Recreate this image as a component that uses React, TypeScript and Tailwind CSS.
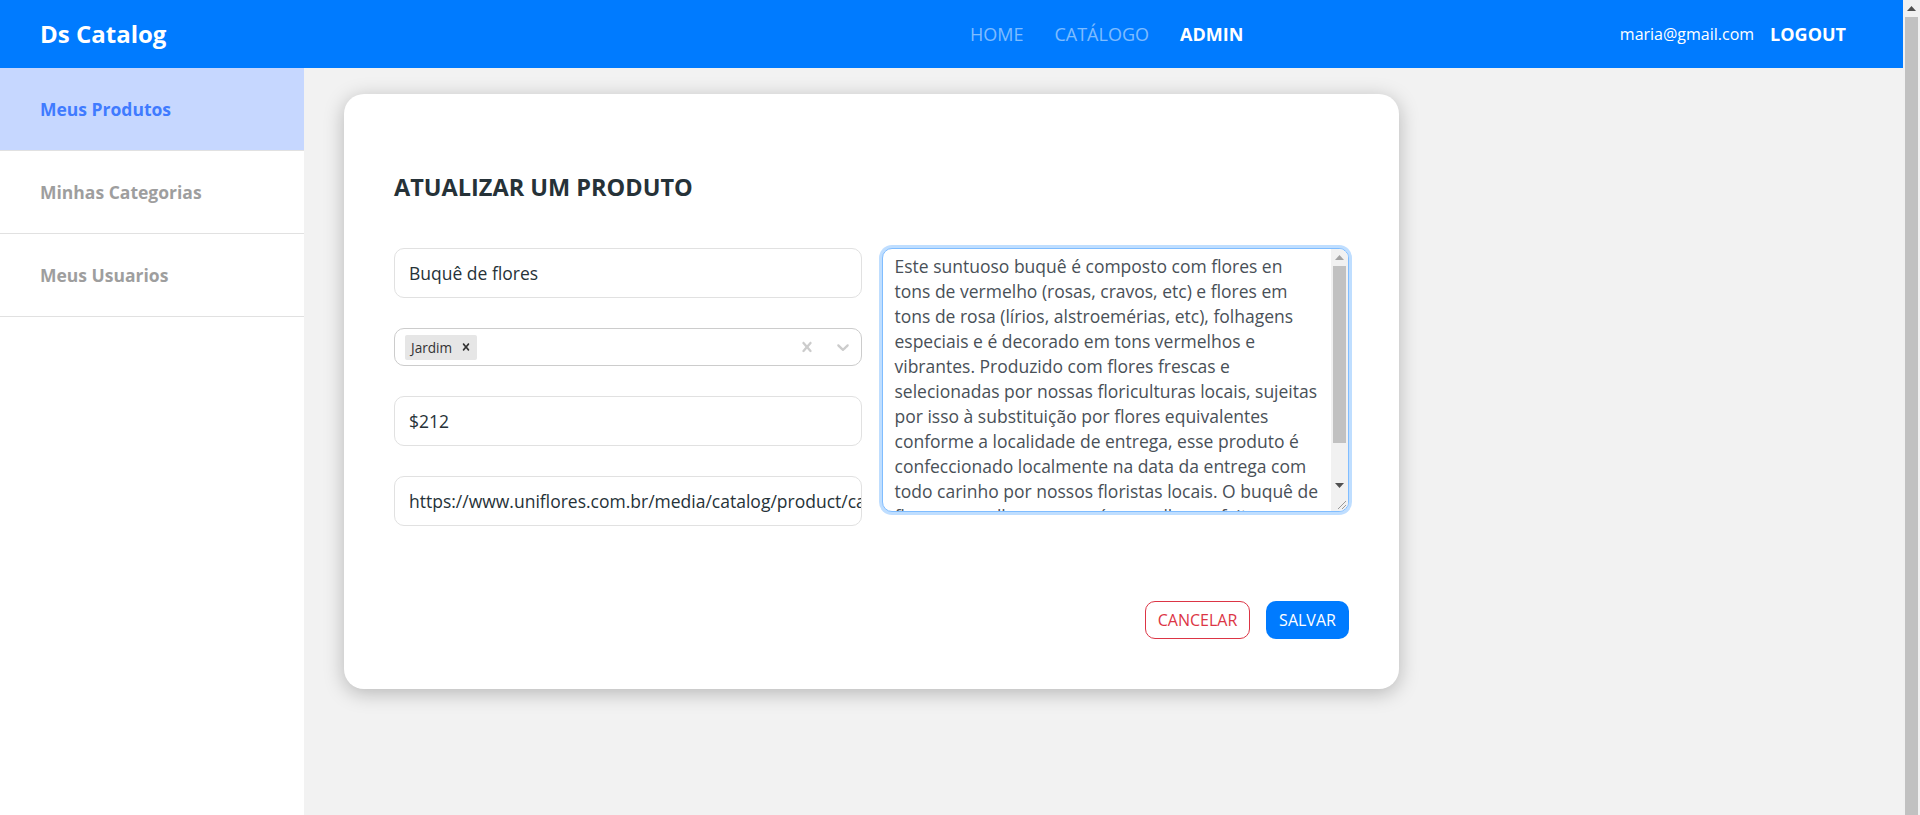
import React from "react";

const descriptionLines = [
  "Este suntuoso buquê é composto com flores en",
  "tons de vermelho (rosas, cravos, etc) e flores em",
  "tons de rosa (lírios, alstroemérias, etc), folhagens",
  "especiais e é decorado em tons vermelhos e",
  "vibrantes. Produzido com flores frescas e",
  "selecionadas por nossas floriculturas locais, sujeitas",
  "por isso à substituição por flores equivalentes",
  "conforme a localidade de entrega, esse produto é",
  "confeccionado localmente na data da entrega com",
  "todo carinho por nossos floristas locais. O buquê de",
  "flores vermelhas e rosas é a escolha perfeita para",
];

function CrossIcon({ className }: { className?: string }) {
  return (
    <svg viewBox="0 0 20 20" className={className} fill="currentColor" aria-hidden="true">
      <path d="M14.348 14.849c-0.469 0.469-1.229 0.469-1.697 0l-2.651-3.030-2.651 3.029c-0.469 0.469-1.229 0.469-1.697 0-0.469-0.469-0.469-1.229 0-1.697l2.758-3.15-2.759-3.152c-0.469-0.469-0.469-1.228 0-1.697s1.228-0.469 1.697 0l2.652 3.031 2.651-3.031c0.469-0.469 1.228-0.469 1.697 0s0.469 1.229 0 1.697l-2.758 3.152 2.758 3.15c0.469 0.469 0.469 1.229 0 1.698z" />
    </svg>
  );
}

function ChevronIcon({ className }: { className?: string }) {
  return (
    <svg viewBox="0 0 20 20" className={className} fill="currentColor" aria-hidden="true">
      <path d="M4.516 7.548c0.436-0.446 1.043-0.481 1.576 0l3.908 3.747 3.908-3.747c0.533-0.481 1.141-0.446 1.574 0 0.436 0.445 0.408 1.197 0 1.615-0.406 0.418-4.695 4.502-4.695 4.502-0.217 0.223-0.502 0.335-0.787 0.335s-0.57-0.112-0.789-0.335c0 0-4.287-4.084-4.695-4.502s-0.436-1.17 0-1.615z" />
    </svg>
  );
}

function ArrowUp({ color }: { color: string }) {
  return (
    <svg width="9" height="5" viewBox="0 0 9 5" aria-hidden="true">
      <polygon points="0,5 4.5,0 9,5" fill={color} />
    </svg>
  );
}

function ArrowDown({ color }: { color: string }) {
  return (
    <svg width="9" height="5" viewBox="0 0 9 5" aria-hidden="true">
      <polygon points="0,0 9,0 4.5,5" fill={color} />
    </svg>
  );
}

function Resizer() {
  return (
    <svg width="17" height="17" viewBox="0 0 17 17" aria-hidden="true">
      <line x1="15" y1="7" x2="7" y2="15" stroke="#9a9a9a" strokeWidth="1" />
      <line x1="15" y1="11" x2="11" y2="15" stroke="#9a9a9a" strokeWidth="1" />
    </svg>
  );
}

export default function App() {
  return (
    <div className="h-[815px] overflow-hidden flex font-['Open_Sans',sans-serif]">
      <div className="flex-1 flex flex-col bg-[#f2f2f2]">
        {/* Navbar */}
        <nav className="h-[68px] shrink-0 bg-[#007bff] flex items-center pl-[40px] pr-[57px]">
          <div className="w-[930px] text-white font-bold text-[24px] leading-none">Ds Catalog</div>
          <div className="flex items-center gap-[31px] text-[18px]">
            <span className="text-white/50">HOME</span>
            <span className="text-white/50">CATÁLOGO</span>
            <span className="text-white font-bold">ADMIN</span>
          </div>
          <div className="ml-auto flex items-center gap-[16px] text-white">
            <span className="text-[16px]">maria@gmail.com</span>
            <span className="text-[18px] font-bold">LOGOUT</span>
          </div>
        </nav>

        <div className="flex flex-1">
          {/* Sidebar */}
          <aside className="w-[304px] bg-white shrink-0">
            <div className="h-[83px] bg-[#c6d7ff] border-b border-[#e1e1e1] flex items-center pl-[40px] text-[17.5px] font-bold text-[#407bff]">
              Meus Produtos
            </div>
            <div className="h-[83px] border-b border-[#e1e1e1] flex items-center pl-[40px] text-[17.5px] font-bold text-[#9e9e9e]">
              Minhas Categorias
            </div>
            <div className="h-[83px] border-b border-[#e1e1e1] flex items-center pl-[40px] text-[17.5px] font-bold text-[#9e9e9e]">
              Meus Usuarios
            </div>
          </aside>

          {/* Main */}
          <main className="flex-1 pt-[26px] pl-[40px]">
            <div className="w-[1055px] bg-white rounded-[20px] shadow-[0_4px_20px_rgba(0,0,0,0.25)] px-[50px] pt-[78px] pb-[50px]">
              <h1 className="text-[23.5px] leading-[30px] font-bold text-[#263238]">ATUALIZAR UM PRODUTO</h1>

              <div className="mt-[46px] grid grid-cols-2 gap-x-[20px]">
                <div className="flex flex-col gap-[30px]">
                  <div className="h-[50px] border border-[#e1e1e1] rounded-[10px] flex items-center px-[14px] text-[17.5px] text-[#263238]">
                    Buquê de flores
                  </div>
                  <div className="h-[38px] border border-[#cccccc] rounded-[10px] flex items-center pl-[8px]">
                    <div className="flex-1 flex items-center">
                      <div className="m-[2px] bg-[#e6e6e6] rounded-[2px] flex items-center h-[25px]">
                        <span className="text-[13.6px] text-[#333333] pl-[6px] pr-[3px] py-[3px] leading-[19px]">Jardim</span>
                        <span className="px-[4px] text-[#333333] flex items-center">
                          <CrossIcon className="w-[14px] h-[14px]" />
                        </span>
                      </div>
                    </div>
                    <div className="flex items-center">
                      <span className="p-[8px] text-[#cccccc]">
                        <CrossIcon className="w-[20px] h-[20px]" />
                      </span>
                      <span className="p-[8px] text-[#cccccc]">
                        <ChevronIcon className="w-[20px] h-[20px]" />
                      </span>
                    </div>
                  </div>
                  <div className="h-[50px] border border-[#e1e1e1] rounded-[10px] flex items-center px-[14px] text-[17.5px] text-[#263238]">
                    $212
                  </div>
                  <div className="h-[50px] border border-[#e1e1e1] rounded-[10px] flex items-center px-[14px] text-[17.5px] text-[#263238] overflow-hidden whitespace-nowrap">
                    https://www.uniflores.com.br/media/catalog/product/cache/1/image/buque-de-flores.jpg
                  </div>
                </div>

                {/* Description textarea */}
                <div className="h-[264px] flex border border-[#80bdff] rounded-[10px] shadow-[0_0_0_3px_rgba(0,123,255,0.25)] overflow-hidden bg-white">
                  <div className="flex-1 overflow-hidden pl-[12px] pr-[12px] pt-[5px] text-[17.5px] leading-[25px] text-[#495057]">
                    {descriptionLines.map((l, i) => (
                      <div key={i} className="whitespace-nowrap">{l}</div>
                    ))}
                  </div>
                  <div className="w-[17px] shrink-0 flex flex-col bg-[#f1f1f1]">
                    <div className="h-[17px] flex items-center justify-center">
                      <ArrowUp color="#a3a3a3" />
                    </div>
                    <div className="flex-1 flex flex-col">
                      <div className="h-[177px] mx-[2px] bg-[#c1c1c1]" />
                    </div>
                    <div className="h-[17px] flex items-center justify-center">
                      <ArrowDown color="#505050" />
                    </div>
                    <div className="h-[17px] flex items-end justify-end">
                      <Resizer />
                    </div>
                  </div>
                </div>
              </div>

              <div className="mt-[75px] flex justify-end gap-[16px]">
                <button className="h-[38px] w-[105px] border border-[#dc3545] rounded-[10px] text-[#dc3545] text-[16px] bg-white">
                  CANCELAR
                </button>
                <button className="h-[38px] w-[83px] rounded-[10px] bg-[#007bff] text-white text-[16px]">
                  SALVAR
                </button>
              </div>
            </div>
          </main>
        </div>
      </div>

      {/* Page scrollbar */}
      <div className="w-[17px] shrink-0 flex flex-col bg-[#f1f1f1]">
        <div className="h-[17px] flex items-center justify-center">
          <ArrowUp color="#505050" />
        </div>
        <div className="flex-1 mx-[2px] bg-[#c1c1c1]" />
      </div>
    </div>
  );
}
